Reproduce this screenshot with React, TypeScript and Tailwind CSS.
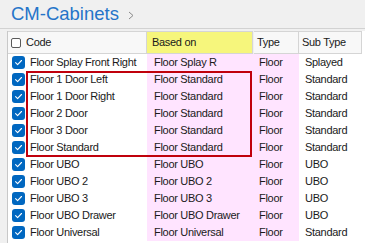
import React from "react";

type Row = { code: string; based: string; type: string; sub: string };

const rows: Row[] = [
  { code: "Floor Splay Front Right", based: "Floor Splay R", type: "Floor", sub: "Splayed" },
  { code: "Floor 1 Door Left", based: "Floor Standard", type: "Floor", sub: "Standard" },
  { code: "Floor 1 Door Right", based: "Floor Standard", type: "Floor", sub: "Standard" },
  { code: "Floor 2 Door", based: "Floor Standard", type: "Floor", sub: "Standard" },
  { code: "Floor 3 Door", based: "Floor Standard", type: "Floor", sub: "Standard" },
  { code: "Floor Standard", based: "Floor Standard", type: "Floor", sub: "Standard" },
  { code: "Floor UBO", based: "Floor UBO", type: "Floor", sub: "UBO" },
  { code: "Floor UBO 2", based: "Floor UBO 2", type: "Floor", sub: "UBO" },
  { code: "Floor UBO 3", based: "Floor UBO 3", type: "Floor", sub: "UBO" },
  { code: "Floor UBO Drawer", based: "Floor UBO Drawer", type: "Floor", sub: "UBO" },
  { code: "Floor Universal", based: "Floor Universal", type: "Floor", sub: "Standard" },
];

function Checked() {
  return (
    <span className="flex h-[13px] w-[13px] shrink-0 items-center justify-center rounded-[3px] bg-[#0067c0]">
      <svg width="13" height="13" viewBox="0 0 13 13" fill="none">
        <path d="M3.6 6.7 L5.6 8.6 L9.5 4.5" stroke="#ffffff" strokeWidth="1.1" strokeLinecap="round" strokeLinejoin="round" />
      </svg>
    </span>
  );
}

export default function App() {
  return (
    <div
      className="relative h-[243px] w-[365px] overflow-hidden bg-[#f0f0f0] text-[#1a1a1a]"
      style={{ fontFamily: '"Liberation Sans", Arial, sans-serif' }}
    >
      <div className="flex h-[29px] items-start gap-[9px] border-b border-[#d2d2d2] pl-[11px] pt-[3px]">
        <span className="text-[18.5px] leading-[22px] text-[#2574c9]">CM-Cabinets</span>
        <svg className="mt-[8px]" width="6" height="9" viewBox="0 0 6 9" fill="none">
          <path d="M1 1 L5 4.5 L1 8" stroke="#8a8a8a" strokeWidth="1" />
        </svg>
      </div>

      <div className="ml-[7px] mt-[2px] h-[220px] border-l border-[#c8c8c8] bg-white text-[11px] tracking-[-0.3px]">
        <div className="grid h-[23px] w-[354px] grid-cols-[139px_106px_46px_1fr] bg-[#f0f0f0] leading-[21px]">
          <div className="flex items-center gap-[5px] border-y border-r border-[#d5d5d5] bg-[#f8f8f8] pl-[3px]">
            <span className="h-[10px] w-[10px] rounded-[2px] border border-[#5a5a5a] bg-white" />
            <span>Code</span>
          </div>
          <div className="border-y border-r border-[#d5d5d5] bg-[#f6f67c] pl-[5px]">Based on</div>
          <div className="ml-[1px] border-y border-r border-[#d5d5d5] bg-[#f8f8f8] pl-[3px]">Type</div>
          <div className="border-y border-r border-[#d5d5d5] bg-[#f8f8f8] pl-[3px]">Sub Type</div>
        </div>

        {rows.map((r) => (
          <div key={r.code} className="grid h-[17px] grid-cols-[139px_106px_46px_1fr] leading-[17px]">
            <div className="flex items-center gap-[5px] pl-[4px] whitespace-nowrap">
              <Checked />
              <span>{r.code}</span>
            </div>
            <div className="bg-[#ffe4ff] pl-[7px] whitespace-nowrap">{r.based}</div>
            <div className="bg-[#ffe4ff] pl-[6px]">{r.type}</div>
            <div className="pl-[6px]">{r.sub}</div>
          </div>
        ))}
      </div>

      <div className="absolute left-[26px] top-[71px] h-[86px] w-[226px] border-2 border-[#c0000c]" />
    </div>
  );
}
